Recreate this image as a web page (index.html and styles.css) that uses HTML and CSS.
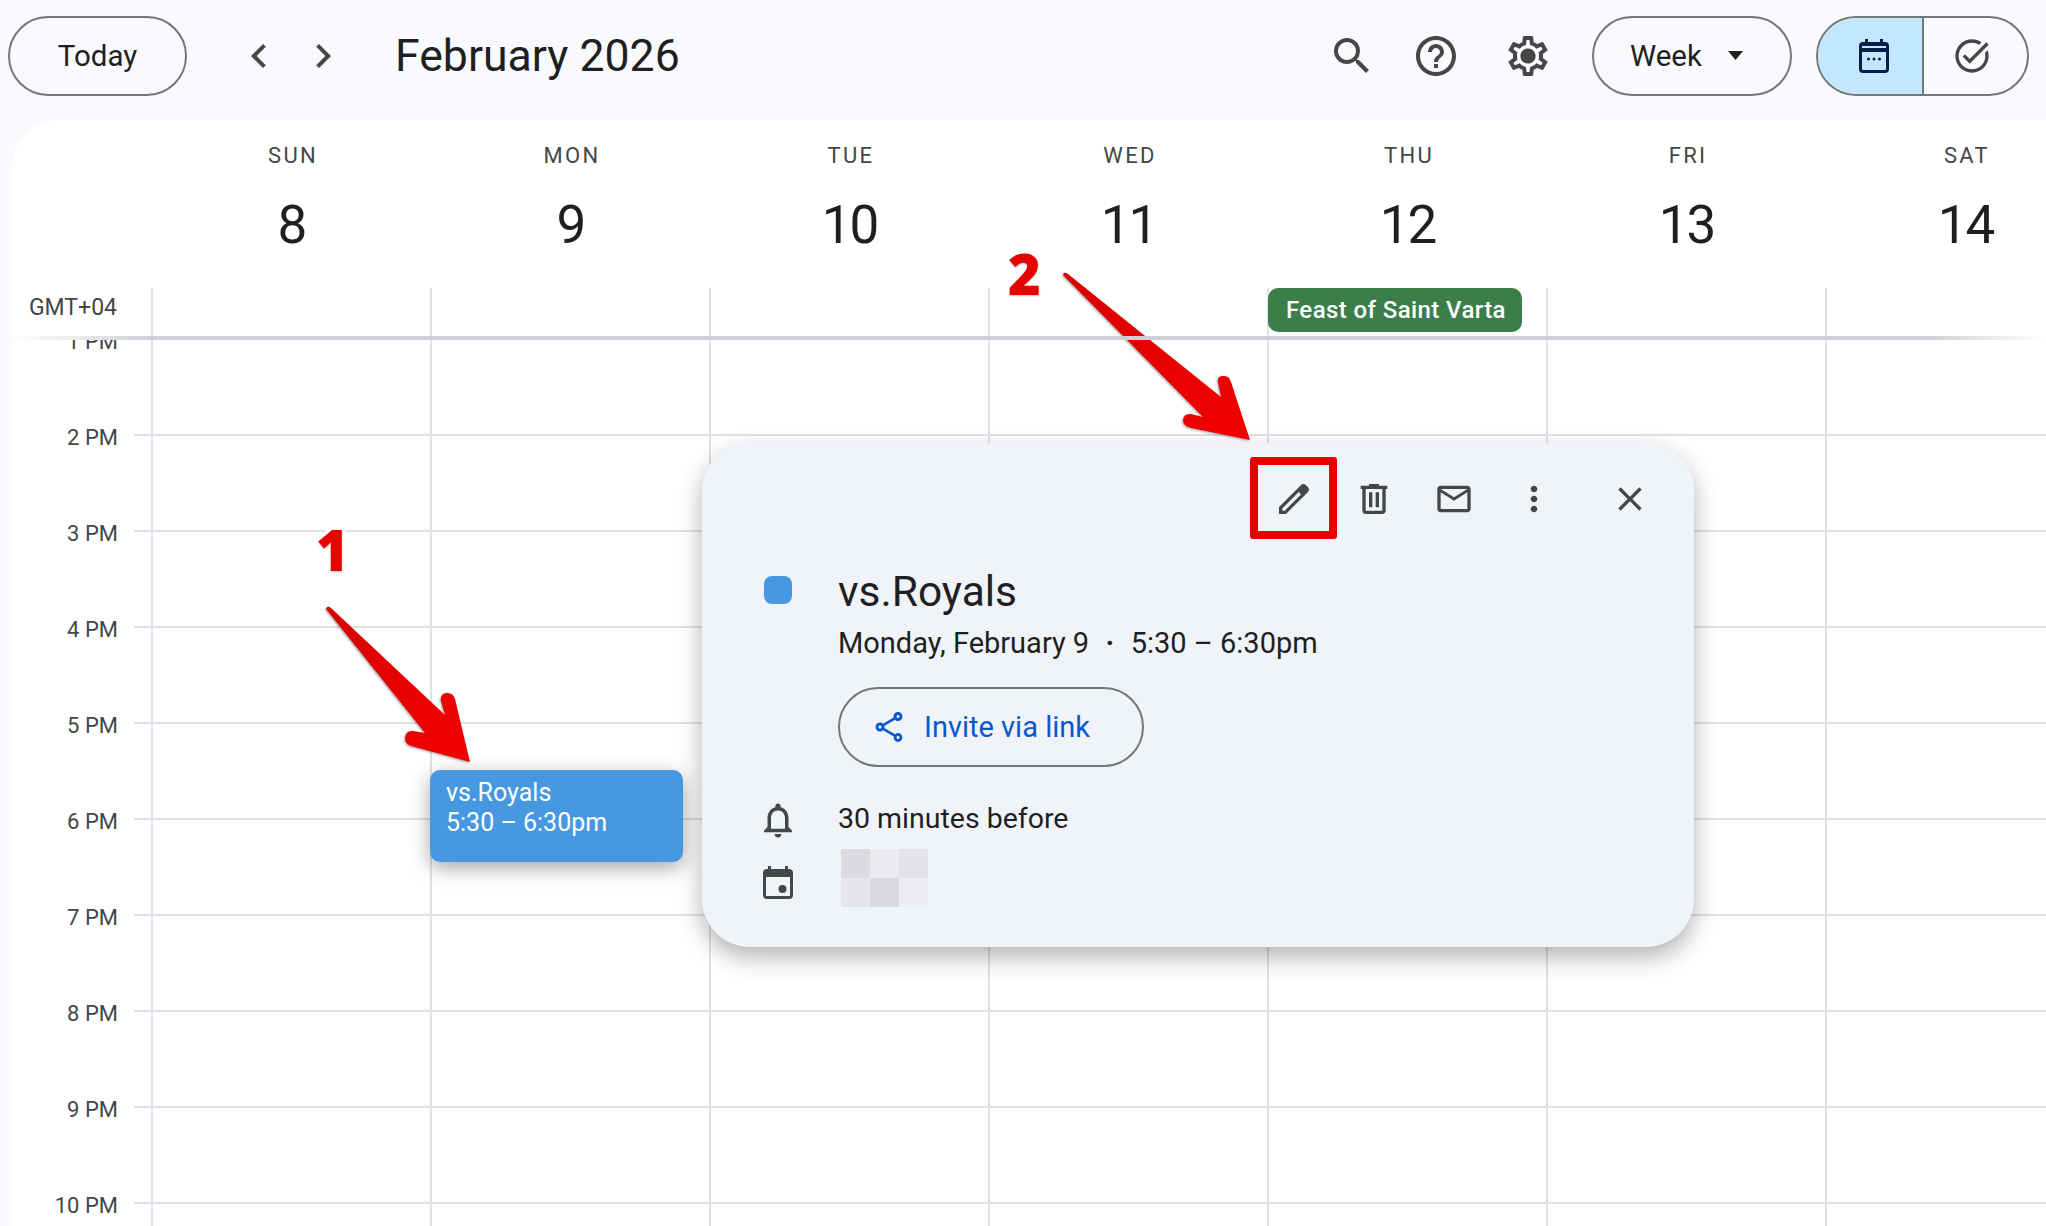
FILE: index.html
```html
<!DOCTYPE html>
<html lang="en">
<head>
    <meta charset="UTF-8">
    <title>Calendar</title>
    <link rel="stylesheet" href="styles.css">
</head>
<body>
<div class="app">

    <!-- Top bar -->
    <div class="topbar">
        <button class="pill today">Today</button>
        <div class="nav">
            <svg class="icon" viewBox="0 0 24 24"><path d="M15.41 7.41 14 6l-6 6 6 6 1.41-1.41L10.83 12z"/></svg>
            <svg class="icon" viewBox="0 0 24 24"><path d="M8.59 16.59 10 18l6-6-6-6-1.41 1.41L13.17 12z"/></svg>
        </div>
        <div class="month">February 2026</div>
        <div class="top-actions">
            <svg class="icon" viewBox="0 0 24 24"><path d="M15.5 14h-.79l-.28-.27A6.471 6.471 0 0 0 16 9.5 6.5 6.5 0 1 0 9.5 16c1.61 0 3.09-.59 4.23-1.57l.27.28v.79l5 4.99L20.49 19l-4.99-5zm-6 0C7.01 14 5 11.99 5 9.5S7.01 5 9.5 5 14 7.01 14 9.5 11.99 14 9.5 14z"/></svg>
            <svg class="icon help" viewBox="0 0 24 24"><path d="M11 18h2v-2h-2v2zm1-16C6.48 2 2 6.48 2 12s4.48 10 10 10 10-4.48 10-10S17.52 2 12 2zm0 18c-4.41 0-8-3.59-8-8s3.59-8 8-8 8 3.59 8 8-3.59 8-8 8zm0-14c-2.21 0-4 1.79-4 4h2c0-1.1.9-2 2-2s2 .9 2 2c0 2-3 1.75-3 5h2c0-2.25 3-2.5 3-5 0-2.21-1.79-4-4-4z"/></svg>
            <svg class="icon gear" viewBox="0 0 24 24"><path d="M19.43 12.98c.04-.32.07-.64.07-.98 0-.34-.03-.66-.07-.98l2.11-1.65c.19-.15.24-.42.12-.64l-2-3.46c-.09-.16-.26-.25-.44-.25-.06 0-.12.01-.17.03l-2.49 1c-.52-.4-1.08-.73-1.69-.98l-.38-2.65C14.46 2.18 14.25 2 14 2h-4c-.25 0-.46.18-.49.42l-.38 2.65c-.61.25-1.17.59-1.69.98l-2.49-1c-.06-.02-.12-.03-.18-.03-.17 0-.34.09-.43.25l-2 3.46c-.13.22-.07.49.12.64l2.11 1.65c-.04.32-.07.65-.07.98 0 .33.03.66.07.98l-2.11 1.65c-.19.15-.24.42-.12.64l2 3.46c.09.16.26.25.44.25.06 0 .12-.01.17-.03l2.49-1c.52.4 1.08.73 1.69.98l.38 2.65c.03.24.24.42.49.42h4c.25 0 .46-.18.49-.42l.38-2.65c.61-.25 1.17-.59 1.69-.98l2.49 1c.06.02.12.03.18.03.17 0 .34-.09.43-.25l2-3.46c.12-.22.07-.49-.12-.64l-2.11-1.65zm-1.98-1.71c.04.31.05.52.05.73 0 .21-.02.43-.05.73l-.14 1.13.89.7 1.08.84-.7 1.21-1.27-.51-1.04-.42-.9.68c-.43.32-.84.56-1.25.73l-1.06.43-.16 1.13-.2 1.35h-1.4l-.19-1.35-.16-1.13-1.06-.43c-.43-.18-.83-.41-1.23-.71l-.91-.7-1.06.43-1.27.51-.7-1.21 1.08-.84.89-.7-.14-1.13c-.03-.31-.05-.54-.05-.74s.02-.43.05-.73l.14-1.13-.89-.7-1.08-.84.7-1.21 1.27.51 1.04.42.9-.68c.43-.32.84-.56 1.25-.73l1.06-.43.16-1.13.2-1.35h1.39l.19 1.35.16 1.13 1.06.43c.43.18.83.41 1.23.71l.91.7 1.06-.43 1.27-.51.7 1.21-1.07.85-.89.7.14 1.13zM12 8.200c-2.100 0-3.800 1.700-3.800 3.800s1.700 3.800 3.800 3.800 3.800-1.700 3.800-3.800-1.700-3.800-3.800-3.800z"/></svg>
        </div>
        <button class="pill week">Week
            <svg class="caret" viewBox="0 0 15 9"><path d="M0 0h15L7.500 9z"/></svg>
        </button>
        <div class="pill toggle">
            <div class="toggle-item active">
                <svg class="cal-icon" viewBox="0 0 30 34"><path fill-rule="evenodd" d="M6 0h3v3h12V0h3v3h2a4 4 0 0 1 4 4v23a4 4 0 0 1-4 4H4a4 4 0 0 1-4-4V7a4 4 0 0 1 4-4h2zM3 13v17a1 1 0 0 0 1 1h22a1 1 0 0 0 1-1V13zM3 7v2h24V7z"/><circle cx="9.500" cy="20" r="1.500"/><circle cx="15" cy="20" r="1.500"/><circle cx="20.500" cy="20" r="1.500"/></svg>
            </div>
            <div class="toggle-item">
                <svg class="icon task" viewBox="0 0 24 24"><path d="M22 5.180 10.590 16.600l-4.240-4.240 1.410-1.410 2.830 2.830 10-10L22 5.180zm-2.210 5.040c.13.570.21 1.170.21 1.780 0 4.420-3.580 8-8 8s-8-3.580-8-8 3.580-8 8-8c1.580 0 3.040.460 4.280 1.220l1.440-1.440C16.100 2.670 14.130 2 12 2 6.480 2 2 6.480 2 12s4.480 10 10 10 10-4.480 10-10c0-1.190-.220-2.330-.6-3.390l-1.610 1.610z"/></svg>
            </div>
        </div>
    </div>

    <!-- Calendar -->
    <div class="calendar">
        <div class="day-heads">
            <div></div>
            <div class="day-head"><div class="day-name">SUN</div><div class="day-num">8</div></div>
            <div class="day-head"><div class="day-name">MON</div><div class="day-num">9</div></div>
            <div class="day-head"><div class="day-name">TUE</div><div class="day-num">10</div></div>
            <div class="day-head"><div class="day-name">WED</div><div class="day-num">11</div></div>
            <div class="day-head"><div class="day-name">THU</div><div class="day-num">12</div></div>
            <div class="day-head"><div class="day-name">FRI</div><div class="day-num">13</div></div>
            <div class="day-head"><div class="day-name">SAT</div><div class="day-num">14</div></div>
        </div>

        <div class="allday">
            <div class="tz">GMT+04</div>
            <div class="allday-cell"></div>
            <div class="allday-cell"></div>
            <div class="allday-cell"></div>
            <div class="allday-cell"></div>
            <div class="allday-cell"><div class="holiday">Feast of Saint Varta</div></div>
            <div class="allday-cell"></div>
            <div class="allday-cell"></div>
        </div>

        <div class="grid-body">
            <div class="hours">
                <div class="hour"><span>1 PM</span></div>
                <div class="hour"><span>2 PM</span></div>
                <div class="hour"><span>3 PM</span></div>
                <div class="hour"><span>4 PM</span></div>
                <div class="hour"><span>5 PM</span></div>
                <div class="hour"><span>6 PM</span></div>
                <div class="hour"><span>7 PM</span></div>
                <div class="hour"><span>8 PM</span></div>
                <div class="hour"><span>9 PM</span></div>
                <div class="hour"><span>10 PM</span></div>
            </div>
            <div class="day-col"></div>
            <div class="day-col"></div>
            <div class="day-col"></div>
            <div class="day-col"></div>
            <div class="day-col"></div>
            <div class="day-col"></div>
            <div class="day-col"></div>
        </div>
    </div>

    <!-- Selected event -->
    <div class="event">
        <div>vs.Royals</div>
        <div>5:30 – 6:30pm</div>
    </div>

    <!-- Event popup -->
    <div class="popup">
        <div class="popup-tools">
            <div class="tool"><svg class="icon" viewBox="0 0 24 24"><path d="M20.410 4.940l-1.350-1.350c-.78-.78-2.050-.78-2.830 0L3 16.820V21h4.180L20.410 7.770c.79-.78.79-2.050 0-2.830zm-14 14.120L5 19v-1.360l9.820-9.820 1.410 1.410-9.820 9.830z"/></svg></div>
            <div class="tool"><svg class="icon" viewBox="0 0 24 24"><path fill-rule="evenodd" d="M7 21c-1.100 0-2-.9-2-2V6H4V4h5V3h6v1h5v2h-1v13c0 1.100-.9 2-2 2zM17 6H7v13h10zM9 17h2V8H9zm4 0h2V8h-2z"/></svg></div>
            <div class="tool"><svg class="icon" viewBox="0 0 24 24"><path d="M22 6c0-1.100-.9-2-2-2H4c-1.100 0-2 .9-2 2v12c0 1.100.9 2 2 2h16c1.100 0 2-.9 2-2V6zm-2 0l-8 5-8-5h16zm0 12H4V8l8 5 8-5v10z"/></svg></div>
            <div class="tool"><svg class="icon" viewBox="0 0 24 24"><path d="M12 8c1.100 0 2-.9 2-2s-.9-2-2-2-2 .9-2 2 .9 2 2 2zm0 2c-1.100 0-2 .9-2 2s.9 2 2 2 2-.9 2-2-.9-2-2-2zm0 6c-1.100 0-2 .9-2 2s.9 2 2 2 2-.9 2-2-.9-2-2-2z"/></svg></div>
            <div class="tool close"><svg class="icon" viewBox="0 0 24 24"><path d="M19 6.410 17.590 5 12 10.590 6.410 5 5 6.410 10.590 12 5 17.590 6.410 19 12 13.410 17.590 19 19 17.590 13.410 12 19 6.410z"/></svg></div>
        </div>

        <div class="popup-row title-row">
            <div class="popup-icon"><div class="color-dot"></div></div>
            <div>
                <div class="popup-title">vs.Royals</div>
                <div class="popup-date">Monday, February 9 &nbsp;<span class="date-dot">·</span>&nbsp; 5:30 – 6:30pm</div>
                <button class="pill invite">
                    <svg class="share" viewBox="0 0 24 24"><path d="M18 16.080c-.76 0-1.440.3-1.960.77L8.910 12.700c.05-.23.09-.46.09-.7s-.04-.47-.09-.7l7.050-4.110c.54.5 1.250.81 2.040.81 1.660 0 3-1.340 3-3s-1.340-3-3-3-3 1.340-3 3c0 .24.040.47.09.7L8.040 9.810C7.500 9.310 6.790 9 6 9c-1.660 0-3 1.340-3 3s1.340 3 3 3c.79 0 1.500-.31 2.040-.81l7.120 4.160c-.05.21-.08.43-.08.65 0 1.610 1.310 2.920 2.920 2.920s2.920-1.310 2.920-2.920c0-1.610-1.310-2.920-2.920-2.920zM18 4c.55 0 1 .45 1 1s-.45 1-1 1-1-.45-1-1 .45-1 1-1zM6 13c-.55 0-1-.45-1-1s.45-1 1-1 1 .45 1 1-.45 1-1 1zm12 7.020c-.55 0-1-.45-1-1s.45-1 1-1 1 .45 1 1-.45 1-1 1z"/></svg>
                    Invite via link
                </button>
            </div>
        </div>

        <div class="popup-row reminder-row">
            <div class="popup-icon"><svg class="bell" viewBox="0 0 24 24"><path fill-rule="evenodd" d="M12 22c1.100 0 2-.9 2-2h-4c0 1.100.9 2 2 2zm6-6v-5c0-3.070-1.630-5.640-4.500-6.320V4c0-.83-.67-1.500-1.500-1.500s-1.500.67-1.500 1.500v.68C7.640 5.360 6 7.920 6 11v5l-2 2v1h16v-1l-2-2zm-2 1H8v-6c0-2.480 1.510-4.500 4-4.500s4 2.020 4 4.500v6z"/></svg></div>
            <div class="reminder">30 minutes before</div>
        </div>

        <div class="popup-row owner-row">
            <div class="popup-icon"><svg class="cal-small" viewBox="0 0 30 33"><path fill-rule="evenodd" d="M5 0h3v3h14V0h3v3h1a4 4 0 0 1 4 4v22a4 4 0 0 1-4 4H4a4 4 0 0 1-4-4V7a4 4 0 0 1 4-4h1zM3 11v19h24V11z"/><circle cx="19.500" cy="23" r="4"/></svg></div>
            <div class="blurred">
                <div class="px1"></div><div class="px2"></div><div class="px3"></div>
                <div class="px4"></div><div class="px1"></div><div class="px5"></div>
            </div>
        </div>
    </div>

    <!-- Annotations -->
    <div class="edit-box"></div>
    <span class="step step-one">1</span>
    <span class="step step-two">2</span>
    <svg class="arrows" viewBox="0 0 2046 1226">
        <defs>
            <linearGradient id="redFill" x1="0" y1="0" x2="1" y2="1">
                <stop offset="0" stop-color="#d80000"/>
                <stop offset="1" stop-color="#f40000"/>
            </linearGradient>
        </defs>
        <path class="arrow" d="M326 609 Q327 605 331 608 L445 715 L441 701 Q440 694 446 693 Q453 692 455 699 L470 762 L411 746 Q405 744 405 738 Q406 730 413 731 L425 733 Z"/>
        <path class="arrow" d="M1063 275 Q1064 271 1068 274 L1221 397 L1218 382 Q1217 376 1223 376 Q1229 375 1231 382 L1250 440 L1191 428 Q1183 426 1183 420 Q1184 413 1191 414 L1203 417 Z"/>
    </svg>
</div>
</body>
</html>
```

FILE: styles.css
```css
body {
    margin: 0;
    font-family: Roboto, Arial, sans-serif;
    color: #1f1f1f;
}
.app {
    position: relative;
    width: 2046px;
    height: 1226px;
    overflow: hidden;
    background-color: #f8fafd;
}
.icon {
    width: 48px;
    height: 48px;
    fill: #444746;
    flex: none;
}
.pill {
    box-sizing: border-box;
    height: 80px;
    border: 2px solid #747775;
    border-radius: 40px;
    background: transparent;
    font-family: inherit;
    font-size: 29.5px;
    font-weight: 450;
    color: #1f1f1f;
    padding: 0;
}

/* top bar */
.topbar {
    display: flex;
    align-items: center;
    height: 120px;
    box-sizing: border-box;
    padding: 0 17px 9px 8px;
}
.today {
    width: 179px;
}
.nav {
    display: flex;
    gap: 16px;
    margin-left: 48px;
}
.month {
    margin-left: 48px;
    font-size: 44.600px;
    white-space: nowrap;
}
.top-actions {
    display: flex;
    align-items: center;
    margin-left: auto;
    gap: 36px;
}
.top-actions .gear {
    margin-left: 8px;
}
.week {
    display: flex;
    align-items: center;
    width: 200px;
    margin-left: 40px;
    padding-left: 36px;
}
.caret {
    width: 15px;
    height: 9px;
    margin-left: 26px;
    fill: #1f1f1f;
}
.toggle {
    display: flex;
    width: 213px;
    margin-left: 24px;
    overflow: hidden;
}
.toggle-item {
    display: flex;
    align-items: center;
    justify-content: center;
    flex: 1;
    padding-right: 8px;
}
.toggle-item.active {
    flex: none;
    width: 106px;
    box-sizing: border-box;
    padding: 0 0 0 8px;
    background-color: #c2e7ff;
    border-right: 2px solid #747775;
}
.cal-icon {
    width: 30px;
    height: 34px;
    fill: #041e49;
}
.task {
    width: 40px;
    height: 40px;
}

/* calendar */
.calendar {
    margin-left: 12px;
    background-color: #fff;
    border-top-left-radius: 48px;
    height: 1106px;
}
.day-heads, .allday {
    display: grid;
    grid-template-columns: 139px repeat(7, 279px);
}
.day-heads {
    height: 168px;
}
.day-head {
    text-align: center;
    padding-top: 23px;
}
.day-name {
    font-size: 22px;
    line-height: 26px;
    letter-spacing: 2.3px;
    padding-left: 5px;
    color: #444746;
}
.day-num {
    font-size: 53px;
    line-height: 62px;
    margin-top: 25px;
    padding-left: 2px;
    letter-spacing: -2px;
}
.allday {
    position: relative;
    height: 50px;
}
.allday::after {
    content: "";
    position: absolute;
    left: 0;
    right: 0;
    bottom: -2px;
    height: 4px;
    background: linear-gradient(to right, #fff, #cdd0d5 7%, #cdd0d5 94%, #fff);
    z-index: 1;
}
.tz {
    font-size: 23px;
    line-height: 40px;
    text-align: right;
    padding-right: 34px;
    color: #444746;
}
.allday-cell {
    border-left: 2px solid #dde1e8;
}
.holiday {
    box-sizing: border-box;
    width: 254px;
    height: 44px;
    margin-left: -1px;
    padding-left: 18px;
    border-radius: 10px;
    background-color: #3b7e4a;
    color: #fff;
    font-size: 24px;
    letter-spacing: 0.4px;
    font-weight: 500;
    line-height: 44px;
}
.grid-body {
    display: grid;
    grid-template-columns: 139px repeat(7, 279px);
    height: 888px;
    overflow: hidden;
}
.hour {
    position: relative;
    height: 96px;
    text-align: right;
    padding-right: 33px;
    font-size: 22px;
    color: #444746;
}
.hour span {
    position: relative;
    top: -8px;
    display: block;
    line-height: 24px;
}
.hour::after {
    content: "";
    position: absolute;
    top: 0;
    right: 0;
    width: 17px;
    height: 2px;
    background-color: #dde1e8;
}
.day-col {
    border-left: 2px solid #dde1e8;
    background-image: repeating-linear-gradient(to bottom, #dde1e8 0, #dde1e8 2px, transparent 2px, transparent 96px);
}

/* event */
.event {
    position: absolute;
    left: 430px;
    top: 770px;
    box-sizing: border-box;
    width: 253px;
    height: 92px;
    padding: 8px 16px;
    border-radius: 10px;
    background-color: #4699e0;
    box-shadow: 0 6px 20px rgba(0, 0, 0, 0.35);
    color: #fff;
    font-size: 25px;
    line-height: 30px;
}

/* popup */
.popup {
    position: absolute;
    left: 702px;
    top: 443px;
    box-sizing: border-box;
    width: 992px;
    height: 504px;
    padding-top: 16px;
    border-radius: 48px;
    background-color: #f0f4f9;
    box-shadow: 0 10px 24px rgba(0, 0, 0, 0.3);
}
.popup-tools {
    display: flex;
    justify-content: flex-end;
    padding-right: 24px;
}
.tool {
    display: flex;
    align-items: center;
    justify-content: center;
    width: 80px;
    height: 80px;
}
.tool .icon {
    width: 40px;
    height: 40px;
}
.tool.close {
    margin-left: 16px;
}
.popup-row {
    display: flex;
    padding-left: 62px;
}
.popup-icon {
    width: 74px;
    flex: none;
}
.title-row {
    margin-top: 27px;
}
.color-dot {
    width: 28px;
    height: 28px;
    margin-top: 10px;
    border-radius: 8px;
    background-color: #4699e0;
}
.popup-title {
    font-size: 42.500px;
    line-height: 52px;
}
.popup-date {
    font-size: 29px;
    line-height: 38px;
    margin-top: 6px;
}
.date-dot {
    margin: 0 2px;
    font-weight: 700;
}
.invite {
    display: flex;
    align-items: center;
    width: 306px;
    margin-top: 25px;
    padding-left: 31px;
    font-size: 29px;
    color: #0b57d0;
}
.share {
    width: 36px;
    height: 36px;
    margin-right: 17px;
    fill: #0b57d0;
}
.reminder-row {
    margin-top: 32px;
}
.bell {
    display: block;
    width: 42px;
    height: 42px;
    margin-left: -7px;
}
.bell, .cal-small {
    fill: #444746;
}
.reminder {
    font-size: 28.500px;
    line-height: 40px;
}
.owner-row {
    margin-top: 8px;
}
.cal-small {
    display: block;
    width: 30px;
    height: 33px;
    margin-top: 17px;
    margin-left: -1px;
}
.blurred {
    display: grid;
    grid-template-columns: repeat(3, 29px);
    grid-auto-rows: 29px;
    margin-left: 3px;
}
.px1 { background-color: #dadbe0; }
.px2 { background-color: #e9ebf0; }
.px3 { background-color: #e1e3e9; }
.px4 { background-color: #e4e6eb; }
.px5 { background-color: #eceef3; }

/* annotations */
.edit-box {
    position: absolute;
    left: 1250px;
    top: 457px;
    box-sizing: border-box;
    width: 87px;
    height: 82px;
    border: 8px solid #e60000;
    border-radius: 3px;
}
.step {
    position: absolute;
    font-family: "Open Sans", sans-serif;
    font-weight: 800;
    font-size: 56px;
    line-height: 56px;
    color: #e60000;
    -webkit-text-stroke: 7px #fff;
    paint-order: stroke fill;
    text-shadow: 0 1px 2px rgba(0, 0, 0, 0.25);
}
.step-one {
    left: 316px;
    top: 521px;
}
.step-two {
    left: 1008px;
    top: 245px;
}
.arrows {
    position: absolute;
    left: 0;
    top: 0;
    width: 2046px;
    height: 1226px;
    pointer-events: none;
}
.arrow {
    fill: url(#redFill);
    filter: drop-shadow(-1px 1px 1px rgba(0, 0, 0, 0.35));
}
```
